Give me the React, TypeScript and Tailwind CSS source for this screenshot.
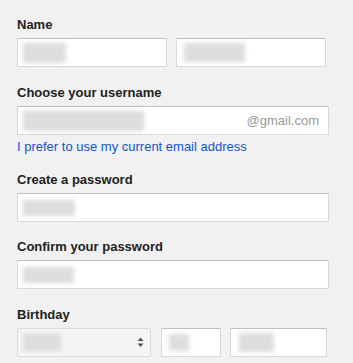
import React from "react";

function Blur({ className }: { className: string }) {
  return <div className={"shrink-0 bg-[#dedcde] blur-[2px] " + className} />;
}

function Field({ className, children }: { className: string; children?: React.ReactNode }) {
  return (
    <div
      className={
        "flex items-center h-[29px] bg-white border border-[#d9d9d9] border-t-[#c0c0c0] " +
        className
      }
    >
      {children}
    </div>
  );
}

function Label({ children, className = "" }: { children: React.ReactNode; className?: string }) {
  return (
    <div className={"h-4 leading-4 text-[13px] font-bold text-[#222] mb-[5px] " + className}>
      {children}
    </div>
  );
}

export default function App() {
  return (
    <div
      className="w-[353px] h-[363px] overflow-hidden bg-[#f1f1f1] pt-[17px] pl-[17px]"
      style={{ fontFamily: '"Liberation Sans", Arial, sans-serif' }}
    >
      <Label>Name</Label>
      <div className="flex gap-[9px]">
        <Field className="w-[150px] pl-[5px]">
          <Blur className="w-[43px] h-[20px]" />
        </Field>
        <Field className="w-[150px] pl-[7px]">
          <Blur className="w-[61px] h-[19px]" />
        </Field>
      </div>

      <Label className="mt-[18px]">Choose your username</Label>
      <Field className="w-[312px] pl-[5px] pr-[9px] justify-between">
        <Blur className="w-[121px] h-[20px]" />
        <span className="text-[13px] leading-4 text-[#999]">@gmail.com</span>
      </Field>
      <div className="mt-[4px] h-4 leading-4 text-[13px] text-[#15c]">
        I prefer to use my current email address
      </div>

      <Label className="mt-[17px]">Create a password</Label>
      <Field className="w-[312px] pl-[5px]">
        <Blur className="w-[52px] h-[16px]" />
      </Field>

      <Label className="mt-[17px]">Confirm your password</Label>
      <Field className="w-[312px] pl-[5px]">
        <Blur className="w-[51px] h-[16px]" />
      </Field>

      <Label className="mt-[18px]">Birthday</Label>
      <div className="flex">
        <div className="flex items-center justify-between w-[134px] h-[29px] pl-[5px] pr-[6px] bg-[#f5f5f5] border border-[#dcdcdc] rounded-[2px]">
          <Blur className="w-[38px] h-[17px]" />
          <svg width="7" height="11" viewBox="0 0 7 11">
            <path d="M3.5 0.5 L6.5 4 L0.5 4 Z" fill="#555" />
            <path d="M0.5 6.5 L6.5 6.5 L3.5 10 Z" fill="#555" />
          </svg>
        </div>
        <Field className="w-[60px] ml-[10px] pl-[7px]">
          <Blur className="w-[20px] h-[17px]" />
        </Field>
        <Field className="w-[97px] ml-[9px] pl-[8px]">
          <Blur className="w-[35px] h-[19px]" />
        </Field>
      </div>
    </div>
  );
}
